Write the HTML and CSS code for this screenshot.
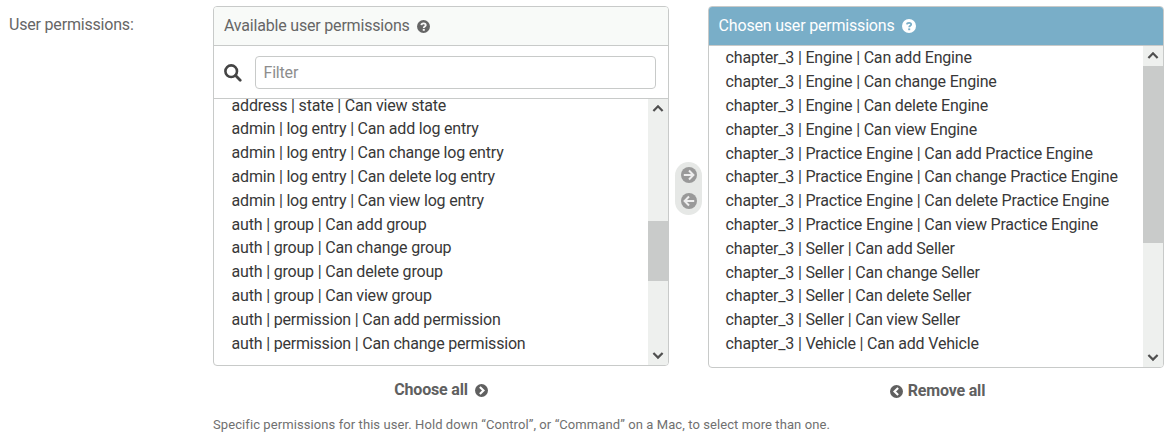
FILE: index.html
```html
<!DOCTYPE html>
<html lang="en">
<head>
<meta charset="utf-8">
<title>User permissions</title>
<link rel="stylesheet" href="styles.css">
</head>
<body>
<div class="form-row">
  <label class="field-label" for="filter">User permissions:</label>
  <div class="field">
    <div class="selector">
      <section class="column available">
        <div class="panel">
          <h2 class="panel-title"><span>Available user permissions</span>
            <svg class="help" viewBox="0 0 14 14"><circle cx="7" cy="7" r="7" fill="#666"/><path d="M4.7 5.5C4.8 3.1 9.4 3 9.4 5.6C9.4 7 7.3 6.9 7.3 8.5" fill="none" stroke="#f8f8f8" stroke-width="2"/><rect x="6.2" y="9.6" width="2.2" height="2" fill="#f8f8f8"/></svg>
          </h2>
          <div class="filter-row">
            <svg class="search" viewBox="0 0 18 18"><circle cx="7.2" cy="7.2" r="5.8" fill="none" stroke="#444" stroke-width="2.6"/><path d="M11.6 11.6L16.2 16.2" stroke="#444" stroke-width="2.8" stroke-linecap="round"/></svg>
            <input class="filter" id="filter" type="text" placeholder="Filter">
          </div>
          <div class="list-wrap">
            <ul class="list list-available">
              <li>address | state | Can view state</li>
              <li>admin | log entry | Can add log entry</li>
              <li>admin | log entry | Can change log entry</li>
              <li>admin | log entry | Can delete log entry</li>
              <li>admin | log entry | Can view log entry</li>
              <li>auth | group | Can add group</li>
              <li>auth | group | Can change group</li>
              <li>auth | group | Can delete group</li>
              <li>auth | group | Can view group</li>
              <li>auth | permission | Can add permission</li>
              <li>auth | permission | Can change permission</li>
            </ul>
            <div class="scrollbar">
              <svg class="arrow" viewBox="0 0 20 20"><path d="M5.4 11.9L10 7.2L14.6 11.9" fill="none" stroke="#505050" stroke-width="2.2"/></svg>
              <div class="track"><div class="thumb thumb-available"></div></div>
              <svg class="arrow" viewBox="0 0 20 20"><path d="M5.4 7.9L10 12.6L14.6 7.9" fill="none" stroke="#505050" stroke-width="2.2"/></svg>
            </div>
          </div>
        </div>
        <a class="bulk choose"><span>Choose all</span>
          <svg class="bulk-icon" viewBox="0 0 12 12"><circle cx="6" cy="6" r="6" fill="#606060"/><path d="M4.5 2.8L7.8 6L4.5 9.2" fill="none" stroke="#fff" stroke-width="2"/></svg>
        </a>
      </section>
      <div class="chooser">
        <svg class="move" viewBox="0 0 16 16"><circle cx="8" cy="8" r="8" fill="#999"/><path d="M2.8 8H12M8 3.5L12.4 8L8 12.5" fill="none" stroke="#eee" stroke-width="2"/></svg>
        <svg class="move" viewBox="0 0 16 16"><circle cx="8" cy="8" r="8" fill="#999"/><path d="M13.2 8H4M8 3.5L3.6 8L8 12.5" fill="none" stroke="#eee" stroke-width="2"/></svg>
      </div>
      <section class="column chosen">
        <div class="panel">
          <h2 class="panel-title"><span>Chosen user permissions</span>
            <svg class="help" viewBox="0 0 14 14"><circle cx="7" cy="7" r="7" fill="#fff"/><path d="M4.9 5.4C5 3.3 9.2 3.2 9.2 5.5C9.2 6.9 7.2 6.8 7.2 8.3" fill="none" stroke="#79aec8" stroke-width="1.8"/><rect x="6.2" y="9.4" width="2" height="1.8" fill="#79aec8"/></svg>
          </h2>
          <div class="list-wrap">
            <ul class="list list-chosen">
              <li>chapter_3 | Engine | Can add Engine</li>
              <li>chapter_3 | Engine | Can change Engine</li>
              <li>chapter_3 | Engine | Can delete Engine</li>
              <li>chapter_3 | Engine | Can view Engine</li>
              <li>chapter_3 | Practice Engine | Can add Practice Engine</li>
              <li>chapter_3 | Practice Engine | Can change Practice Engine</li>
              <li>chapter_3 | Practice Engine | Can delete Practice Engine</li>
              <li>chapter_3 | Practice Engine | Can view Practice Engine</li>
              <li>chapter_3 | Seller | Can add Seller</li>
              <li>chapter_3 | Seller | Can change Seller</li>
              <li>chapter_3 | Seller | Can delete Seller</li>
              <li>chapter_3 | Seller | Can view Seller</li>
              <li>chapter_3 | Vehicle | Can add Vehicle</li>
            </ul>
            <div class="scrollbar">
              <svg class="arrow" viewBox="0 0 20 20"><path d="M5.4 11.9L10 7.2L14.6 11.9" fill="none" stroke="#505050" stroke-width="2.2"/></svg>
              <div class="track"><div class="thumb thumb-chosen"></div></div>
              <svg class="arrow" viewBox="0 0 20 20"><path d="M5.4 7.9L10 12.6L14.6 7.9" fill="none" stroke="#505050" stroke-width="2.2"/></svg>
            </div>
          </div>
        </div>
        <a class="bulk remove">
          <svg class="bulk-icon" viewBox="0 0 12 12"><circle cx="6" cy="6" r="6" fill="#606060"/><path d="M7.5 2.8L4.2 6L7.5 9.2" fill="none" stroke="#fff" stroke-width="2"/></svg>
          <span>Remove all</span></a>
      </section>
    </div>
    <p class="help-text">Specific permissions for this user. Hold down “Control”, or “Command” on a Mac, to select more than one.</p>
  </div>
</div>
</body>
</html>
```
FILE: styles.css
```css
* { box-sizing: border-box; }
body {
  margin: 0;
  height: 441px;
  overflow: hidden;
  background: #fff;
  color: #383838;
  font: 16px/24px Roboto, "Liberation Sans", sans-serif;
  letter-spacing: -0.19px;
}
.form-row { display: flex; padding: 6px 8px 0 9px; }
.field-label { width: 204px; padding-top: 7px; color: #666; }
.field { width: 951px; }
.selector { display: flex; height: 398px; }
.column { width: 456px; }
.panel {
  display: flex;
  flex-direction: column;
  border: 1px solid #c8cac9;
  border-radius: 4px;
  overflow: hidden;
}
.available .panel { height: 360px; }
.chosen .panel { height: 362px; }
.panel-title {
  display: flex;
  align-items: center;
  gap: 7px;
  height: 39px;
  margin: 0;
  padding: 0 10px;
  border-bottom: 1px solid #c8cac9;
  background: #f8faf8;
  color: #666;
  font-size: 16px;
  font-weight: 400;
}
.chosen .panel-title { padding-left: 9.6px; background: #79aec8; color: #fff; }
.help { width: 13px; height: 13px; }
.chosen .help { width: 14px; height: 14px; }
.filter-row {
  display: flex;
  align-items: center;
  gap: 13px;
  height: 53px;
  padding: 0 12px 0 10px;
  border-bottom: 1px solid #c8cac9;
}
.search { width: 18px; height: 18px; flex: none; margin-top: 2px; }
.filter {
  flex: 1;
  height: 33px;
  padding: 0 7.5px;
  border: 1px solid #c8cac9;
  border-radius: 4px;
  background: #fff;
  font: inherit;
  letter-spacing: inherit;
}
.filter::placeholder { color: #8d8d8d; opacity: 1; }
.list-wrap { display: flex; flex: 1; min-height: 0; }
.list {
  flex: 1;
  margin: 0;
  padding: 0 0 0 17px;
  list-style: none;
  line-height: 23.8px;
  white-space: nowrap;
  overflow: hidden;
}
.list-available { padding-left: 17.6px; }
.list-available li:first-child { margin-top: -5.37px; }
.list-chosen { padding: 0.45px 0 0 16.6px; }
.scrollbar {
  display: flex;
  flex-direction: column;
  width: 20px;
  background: #eef0ee;
}
.arrow { width: 20px; height: 20px; flex: none; }
.track { flex: 1; }
.thumb { background: #c9cbca; }
.thumb-available { height: 60px; margin-top: 102px; }
.thumb-chosen { height: 177px; }
.chooser {
  display: flex;
  flex-direction: column;
  align-items: center;
  gap: 10px;
  width: 27px;
  height: 53px;
  margin: 156px 6px 0;
  padding-top: 5px;
  border-radius: 14px;
  background: #e6e8e6;
}
.move { width: 16px; height: 16px; }
.bulk {
  display: flex;
  align-items: center;
  justify-content: center;
  gap: 7px;
  height: 24px;
  color: #606060;
  font-weight: 700;
}
.choose { margin-top: 12px; }
.remove { margin-top: 11px; padding-left: 3px; gap: 5px; }
.bulk-icon { width: 13px; height: 13px; margin-top: 1px; }
.help-text {
  margin: 11px 0 0;
  color: #707070;
  font-size: 13px;
  line-height: 20px;
  letter-spacing: 0.085px;
}
```
